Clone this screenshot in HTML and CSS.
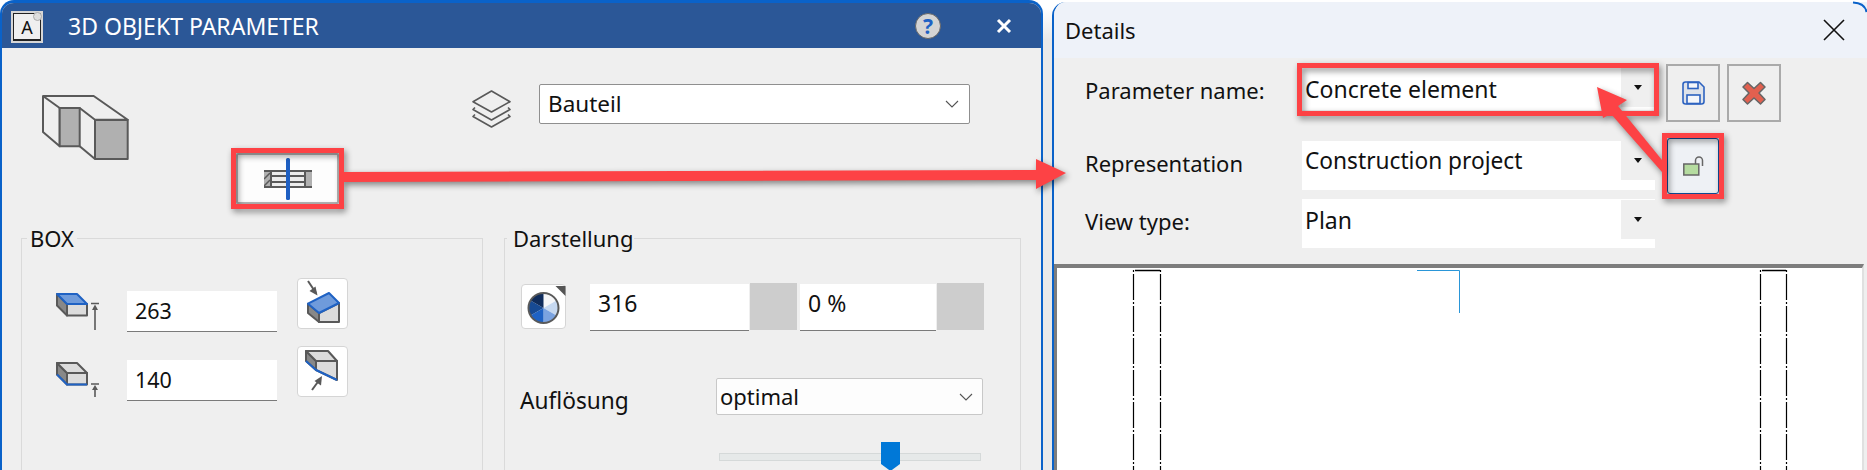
FILE: index.html
```html
<!DOCTYPE html>
<html lang="de">
<head>
<meta charset="utf-8">
<title>3D Objekt Parameter</title>
<link rel="stylesheet" href="styles.css">
</head>
<body>
<main class="page">
  <section class="win-left">
    <header class="titlebar">
      <div class="app-icon"><div class="app-icon-inner">A</div><span class="app-icon-badge"></span></div>
      <h1 class="title">3D OBJEKT PARAMETER</h1>
      <span class="help">?</span>
      <svg class="close-left" width="16" height="16" viewBox="0 0 16 16"><path d="M2 2L14 14M14 2L2 14" stroke="#fff" stroke-width="3" fill="none"/></svg>
    </header>
    <div class="top">
      <div class="top-left">
        <svg class="solid-icon" width="87" height="65" viewBox="-1 -1 87 65">
          <g stroke="#595959" stroke-width="2" stroke-linejoin="round" fill="none">
            <path d="M0 0H50.7L84.7 23.7H52L36.7 12H16.7Z"/>
            <path d="M0 0V36L16.7 50.3V12"/>
            <rect x="16.7" y="12" width="20" height="38.3" fill="#b0b0b0"/>
            <rect x="52" y="24" width="32.7" height="39" fill="#b0b0b0"/>
            <path d="M36.7 50.3L52 63"/>
          </g>
        </svg>
        <div class="toggle">
          <svg width="48" height="42" viewBox="0 0 48 42">
            <rect x="0" y="12" width="48" height="18" fill="#ececec"/>
            <rect x="0" y="12" width="7" height="18" fill="#b0b0b0"/>
            <rect x="41" y="12" width="7" height="18" fill="#b0b0b0"/>
            <path d="M0 21L6 15M0 28L6 22" stroke="#595959" stroke-width="1.5"/>
            <path d="M0 13H48M0 29H48M7 18H41M7 24H41M7 12V30M41 12V30" stroke="#595959" stroke-width="2" fill="none"/>
            <rect x="22" y="0" width="4" height="42" rx="1.5" fill="#1e5fc2"/>
          </svg>
        </div>
      </div>
      <svg class="layers" width="39" height="38" viewBox="0 0 39 38">
        <g fill="none" stroke="#595959" stroke-width="1.6" stroke-linejoin="round">
          <path d="M1 11.7L19.5 1L38 11.7L19.5 22Z"/>
          <path d="M3 17.5L1 19.5L19.5 30L38 19.5L36 17.5"/>
          <path d="M3 24.5L1 26.5L19.5 37L38 26.5L36 24.5"/>
        </g>
      </svg>
      <div class="select-main">
        <span>Bauteil</span>
        <svg width="14" height="8" viewBox="0 0 14 8"><path d="M1 1L7 7L13 1" fill="none" stroke="#555" stroke-width="1.1"/></svg>
      </div>
    </div>
    <div class="groups">
      <fieldset class="group group-box">
        <legend>BOX</legend>
        <div class="box-row">
          <svg class="box-icon" width="44" height="38" viewBox="0 0 44 38">
            <g stroke-width="2" stroke-linejoin="round">
              <path d="M1 1L11 11V22.5L1 12.5Z" fill="#888" stroke="#595959"/>
              <rect x="11" y="11" width="20" height="11.5" fill="#dcdcdc" stroke="#595959"/>
              <path d="M1 1H21L31 11H11Z" fill="#6f9bdb" stroke="#1f62c4"/>
            </g>
            <path d="M35 10.5H43M39 14V37" stroke="#595959" stroke-width="1.6" fill="none"/>
            <path d="M39 11.5L42 17H36Z" fill="#595959"/>
          </svg>
          <div class="field-line">263</div>
          <div class="icon-btn">
            <svg width="51" height="51" viewBox="0 0 51 51">
              <path d="M11 3L19 15" stroke="#595959" stroke-width="2"/>
              <path d="M20.5 17.5L12.5 13L18.5 8.5Z" fill="#595959"/>
              <g stroke-width="2" stroke-linejoin="round">
                <path d="M11 25.7L22 35V44L11 35Z" fill="#888" stroke="#595959"/>
                <path d="M22 35L42 25V44H22Z" fill="#dcdcdc" stroke="#595959"/>
                <path d="M11 25.7L32 15L42 25L22 35Z" fill="#6f9bdb" stroke="#1f62c4"/>
              </g>
            </svg>
          </div>
        </div>
        <div class="box-row lower">
          <svg class="box-icon" width="44" height="36" viewBox="0 0 44 36">
            <g stroke-width="2" stroke-linejoin="round">
              <path d="M1 1L11 11V22.5L1 12.5Z" fill="#888" stroke="#595959"/>
              <rect x="11" y="11" width="20" height="11.5" fill="#dcdcdc" stroke="#595959"/>
              <path d="M1 1H21L31 11H11Z" fill="#dcdcdc" stroke="#595959"/>
              <path d="M1 12.5L11 22.5H31" fill="none" stroke="#1f62c4"/>
            </g>
            <path d="M35 22H43M39 26V35" stroke="#595959" stroke-width="1.6" fill="none"/>
            <path d="M39 23L42 28H36Z" fill="#595959"/>
          </svg>
          <div class="field-line">140</div>
          <div class="icon-btn">
            <svg width="51" height="51" viewBox="0 0 51 51">
              <g stroke-width="2" stroke-linejoin="round">
                <path d="M9 5L19 15V24L9 15Z" fill="#888" stroke="#595959"/>
                <path d="M19 15H40V34L19 24Z" fill="#dcdcdc" stroke="#595959"/>
                <path d="M9 5H31L40 15H19Z" fill="#dcdcdc" stroke="#595959"/>
                <path d="M9 15L19 24L40 34" fill="none" stroke="#1f62c4"/>
              </g>
              <path d="M15 44L23 33" stroke="#595959" stroke-width="2"/>
              <path d="M25 30L24 39.5L17.5 35Z" fill="#595959"/>
            </svg>
          </div>
        </div>
      </fieldset>
      <fieldset class="group group-view">
        <legend>Darstellung</legend>
        <div class="color-row">
          <div class="color-btn">
            <svg width="45" height="45" viewBox="-22.5 -24 45 45">
              <path d="M0 0V-15A15 15 0 0 1 13 -7.5Z" fill="#f5f6f8"/>
              <path d="M0 0L13 -7.5A15 15 0 0 1 13 7.5Z" fill="#c6d8f0"/>
              <path d="M0 0L13 7.5A15 15 0 0 1 0 15Z" fill="#7ba3e0"/>
              <path d="M0 0V15A15 15 0 0 1 -13 7.5Z" fill="#1f62c4"/>
              <path d="M0 0L-13 7.5A15 15 0 0 1 -13 -7.5Z" fill="#174a94"/>
              <path d="M0 0L-13 -7.5A15 15 0 0 1 0 -15Z" fill="#0f2c5c"/>
              <circle r="15" fill="none" stroke="#595959" stroke-width="2"/>
              <path d="M12 -22H22V-12Z" fill="#555"/>
            </svg>
          </div>
          <div class="field-pair wide"><div class="field-flat">316</div><div class="swatch"></div></div>
          <div class="field-pair narrow"><div class="field-flat">0 %</div><div class="swatch"></div></div>
        </div>
        <div class="res-row">
          <label class="res-label">Auflösung</label>
          <div class="select-small">
            <span>optimal</span>
            <svg width="14" height="8" viewBox="0 0 14 8"><path d="M1 1L7 7L13 1" fill="none" stroke="#555" stroke-width="1.1"/></svg>
          </div>
        </div>
        <div class="slider"><div class="slider-track"></div><div class="slider-thumb"></div></div>
      </fieldset>
    </div>
  </section>

  <div class="win-gap"></div>

  <section class="win-right">
    <header class="details-bar">
      <span class="details-title">Details</span>
      <svg width="22" height="22" viewBox="0 0 22 22"><path d="M1 1L21 21M21 1L1 21" stroke="#111" stroke-width="1.6" fill="none"/></svg>
    </header>
    <div class="form">
      <div class="form-row row-a">
        <label class="form-label">Parameter name:</label>
        <div class="combo short"><span class="combo-text">Concrete element</span><span class="combo-drop"><i class="caret"></i></span></div>
        <div class="square-btn">
          <svg width="24" height="24" viewBox="0 0 24 24">
            <path d="M2 3.500Q2 1 4.500 1H18L23 6V20.500Q23 23 20.500 23H4.500Q2 23 2 20.500Z" fill="#dfe3ea" stroke="#2c62c0" stroke-width="1.6"/>
            <rect x="7" y="1.500" width="10" height="6" fill="#f4f6fa" stroke="#2c62c0" stroke-width="1.6"/>
            <rect x="6" y="14" width="13" height="8.500" fill="#f4f6fa" stroke="#2c62c0" stroke-width="1.6"/>
          </svg>
        </div>
        <div class="square-btn">
          <svg width="24" height="24" viewBox="0 0 24 24"><path d="M5.500 1.500L12 7.500L18.500 1.500L23 6L17 12L23 18.500L18.500 23L12 17L5.500 23L1 18.500L7 12L1 6Z" fill="#e2604f" stroke="#666" stroke-width="1.5" stroke-linejoin="round"/></svg>
        </div>
      </div>
      <div class="form-row row-b">
        <label class="form-label">Representation</label>
        <div class="combo"><span class="combo-text">Construction project</span><span class="combo-drop"><i class="caret"></i></span></div>
        <div class="lock-btn">
          <svg width="22" height="22" viewBox="0 0 22 22">
            <path d="M13.500 9V5.500A3.500 3.500 0 0 1 20.500 5.500V11" fill="none" stroke="#666" stroke-width="1.5"/>
            <rect x="1.800" y="9" width="15" height="11" fill="#b5dca0" stroke="#666" stroke-width="1.5"/>
          </svg>
        </div>
      </div>
      <div class="form-row row-c">
        <label class="form-label">View type:</label>
        <div class="combo"><span class="combo-text">Plan</span><span class="combo-drop"><i class="caret"></i></span></div>
      </div>
    </div>
    <div class="canvas">
      <svg class="drawing" width="807" height="202" viewBox="0 0 807 202">
        <g fill="none" stroke="#000" stroke-width="1.2">
          <path d="M78 2.500H103M705 2.500H729" stroke-width="1.500"/>
          <path d="M76.500 2V202M103.500 2V202M703.500 2V202M729.500 2V202" stroke-dasharray="2 2 26 2"/>
        </g>
        <path d="M360 2.500H402.500V45" fill="none" stroke="#2a96d8" stroke-width="1"/>
      </svg>
    </div>
  </section>

  <svg class="annotations" width="1867" height="470" viewBox="0 0 1867 470">
    <path class="corner-arc" d="M1853 2.500Q1865 3 1866.500 12"/>
    <g class="callouts">
      <rect x="233.500" y="150.500" width="108" height="56"/>
      <rect x="1299.500" y="65.500" width="357" height="48"/>
      <rect x="1664.500" y="135.500" width="57" height="61"/>
      <polygon points="344,172 1036,170 1036,159 1066,173 1036,189 1036,180 344,182"/>
      <polygon points="1597,87 1627,100 1618,106 1662,160 1662,172 1611,114 1603,118"/>
    </g>
  </svg>
</main>
</body>
</html>
```

FILE: styles.css
```css
* { box-sizing: border-box; }
html, body { margin: 0; padding: 0; }
body { background: #fff; font-family: "Noto Sans", "Liberation Sans", sans-serif; color: #111; }
.page { position: relative; display: flex; width: 1867px; height: 470px; overflow: hidden; background: #fff; }

/* left window */
.win-left { flex: 0 0 1043px; height: 470px; background: #efefef; border: solid #0a62c9; border-width: 3px 2px 0; border-radius: 14px 14px 0 0; overflow: hidden; }
.titlebar { display: flex; align-items: center; height: 45px; padding: 0 29px 0 9px; background: #2b5797; }
.app-icon { position: relative; flex: none; width: 32px; height: 32px; padding: 2px; background: #d6d6d6; margin-top: 3px; }
.app-icon-inner { width: 100%; height: 100%; border: 1px solid #222; border-width: 1px 1px 2px 1px; background: #efefef; font-size: 18px; line-height: 26px; text-align: center; color: #111; }
.app-icon-badge { position: absolute; top: 1px; right: 1px; width: 9px; height: 9px; border-radius: 50%; background: #dedede; border: 1px solid #aaa; }
.title { margin: 0 0 0 25px; font-size: 23px; font-weight: 400; line-height: 30px; color: #fff; white-space: nowrap; }
.help { flex: none; width: 26px; height: 26px; margin-left: auto; border-radius: 50%; background: #d4d4d4; border: 1px solid #666; color: #1f62c4; font-size: 21px; font-weight: 700; line-height: 24px; text-align: center; }
.close-left { flex: none; margin-left: 55px; }

.top { display: flex; align-items: flex-start; height: 174px; }
.top-left { flex: 0 0 470px; }
.solid-icon { display: block; margin: 47px 0 -7px 40px; }
.toggle { display: flex; align-items: center; justify-content: center; width: 103px; height: 51px; margin-left: 234px; background: #fdfdfd; border: 2px solid #b5b5b5; border-radius: 2px; }
.layers { flex: none; margin-top: 42px; }
.select-main { display: flex; align-items: center; justify-content: space-between; flex: none; width: 431px; height: 40px; margin: 36px 0 0 28px; padding: 0 10px 0 8px; background: #fff; border: 1px solid #8f8f8f; border-radius: 2px; font-size: 22.5px; line-height: 36px; }

.groups { display: flex; gap: 21px; margin-left: 19px; }
.group { flex: none; height: 300px; margin: 0; padding: 0; border: 1px solid #dadada; }
.group legend { font-size: 22px; line-height: 32px; color: #111; }
.group-box { width: 462px; padding: 24px 0 0 34px; }
.group-box legend { margin-left: -29px; padding: 0 3px; }
.group-view { width: 517px; padding: 29px 0 0 16px; }
.group-view legend { margin-left: -14px; padding: 0 1px 0 6px; }

.box-row { display: grid; grid-template-columns: 71px 150px 51px; column-gap: 0; align-items: start; height: 68px; }
.box-icon { display: block; margin-top: 15px; }
.field-line { height: 41px; margin-top: 13px; padding-left: 8px; background: #fff; border-bottom: 1.5px solid #7a7a7a; font-size: 21.5px; line-height: 39px; }
.box-row.lower .box-icon { margin-top: 16px; }
.box-row.lower .field-line { margin-top: 14px; }
.icon-btn { width: 51px; height: 51px; margin-left: 20px; background: #fff; border: 1px solid #d5d5d5; border-radius: 4px; }
.icon-btn svg { display: block; margin: -1px; }

.color-row { display: flex; align-items: flex-start; }
.color-btn { flex: none; width: 45px; height: 45px; margin: 1px 24px 0 0; background: #fff; border: 1px solid #d5d5d5; border-radius: 4px; }
.color-btn svg { display: block; margin: -1px; }
.field-pair { display: flex; flex: none; margin-right: 3px; }
.field-pair.wide { width: 207px; }
.field-pair.narrow { width: 184px; }
.field-flat { flex: 1; height: 47px; margin-top: 1px; padding-left: 8px; background: #fff; border-bottom: 1.5px solid #7a7a7a; font-size: 23px; line-height: 38px; }
.swatch { flex: none; width: 47px; height: 47px; margin-left: 1px; background: #cdcdcd; }

.res-row { display: flex; align-items: flex-start; margin-top: 47px; margin-left: -1px; }
.res-label { flex: 0 0 196px; margin-top: 4px; font-size: 22.7px; line-height: 37px; }
.select-small { display: flex; align-items: center; justify-content: space-between; flex: none; width: 267px; height: 37px; padding: 0 9px 0 3px; background: #fdfdfd; border: 1px solid #c8c8c8; border-radius: 2px; font-size: 22px; line-height: 33px; }

.slider { position: relative; width: 262px; height: 29px; margin: 23px 0 0 198px; padding-top: 11px; }
.slider-track { height: 8px; background: #e6e9e9; border: 1px solid #d5d9d9; }
.slider-thumb { position: absolute; top: 0; left: 162px; width: 19px; height: 29px; background: #0078d7; clip-path: polygon(0 0, 100% 0, 100% 76%, 50% 100%, 0 76%); }

/* gap between windows */
.win-gap { flex: 0 0 9px; background: linear-gradient(#fff 8px, #e9e9e9 40px); }

/* right window */
.win-right { display: flex; flex-direction: column; flex: 0 0 815px; height: 468px; margin-top: 2px; background: #efefef; border-left: 2px solid #0a62c9; border-top-left-radius: 14px; overflow: hidden; }
.details-bar { display: flex; align-items: center; justify-content: space-between; flex: none; height: 56px; padding: 0 22px 0 11px; background: #eef2f9; }
.details-title { font-size: 22px; line-height: 30px; }
.form { flex: none; height: 206px; padding: 6px 0 0 31px; }
.form-row { display: flex; align-items: flex-start; }
.row-a { height: 74px; }
.row-b { height: 61px; }
.form-label { flex: 0 0 217px; font-size: 22px; line-height: 30px; }
.row-a .form-label { margin-top: 11px; }
.row-b .form-label { margin-top: 10px; }
.row-c .form-label { margin-top: 7px; }
.combo { display: flex; justify-content: space-between; flex: none; width: 353px; height: 49px; background: #fff; }
.combo.short { height: 42px; margin-top: 4px; }
.row-b .combo { margin-top: 3px; }
.combo-text { padding-left: 3px; font-size: 23px; line-height: 42px; }
.row-b .combo-text { font-size: 22.7px; line-height: 40px; }
.combo-drop { display: flex; align-items: center; justify-content: center; flex: none; width: 34px; height: 39px; background: #efefef; }
.row-c .combo-drop { margin-top: 1px; }
.caret { display: block; width: 0; height: 0; border: solid transparent; border-width: 5px 4.5px 0; border-top-color: #111; }
.square-btn { display: flex; align-items: center; justify-content: center; flex: none; width: 54px; height: 58px; margin-left: 11px; border: 2px solid #aaa; }
.square-btn + .square-btn { margin-left: 7px; }
.lock-btn { display: flex; align-items: center; justify-content: center; flex: none; width: 52px; height: 56px; margin-left: 12px; background: #eef1f5; border: 1.5px solid #0f4f9c; border-radius: 3px; }

.canvas { flex: none; height: 206px; margin-right: 3px; background: #fff; border: solid #7d7d7d; border-width: 4px 0 0 3px; border-right: 2px solid #e0e0e0; }
.drawing { display: block; }

/* annotation overlay */
.annotations { position: absolute; top: 0; left: 0; }
.corner-arc { fill: none; stroke: #0a62c9; stroke-width: 2; }
.callouts { filter: drop-shadow(2px 3px 3px rgba(0, 0, 0, 0.45)); }
.callouts rect { fill: none; stroke: #fd4245; stroke-width: 5; }
.callouts polygon { fill: #fd4245; }
```
